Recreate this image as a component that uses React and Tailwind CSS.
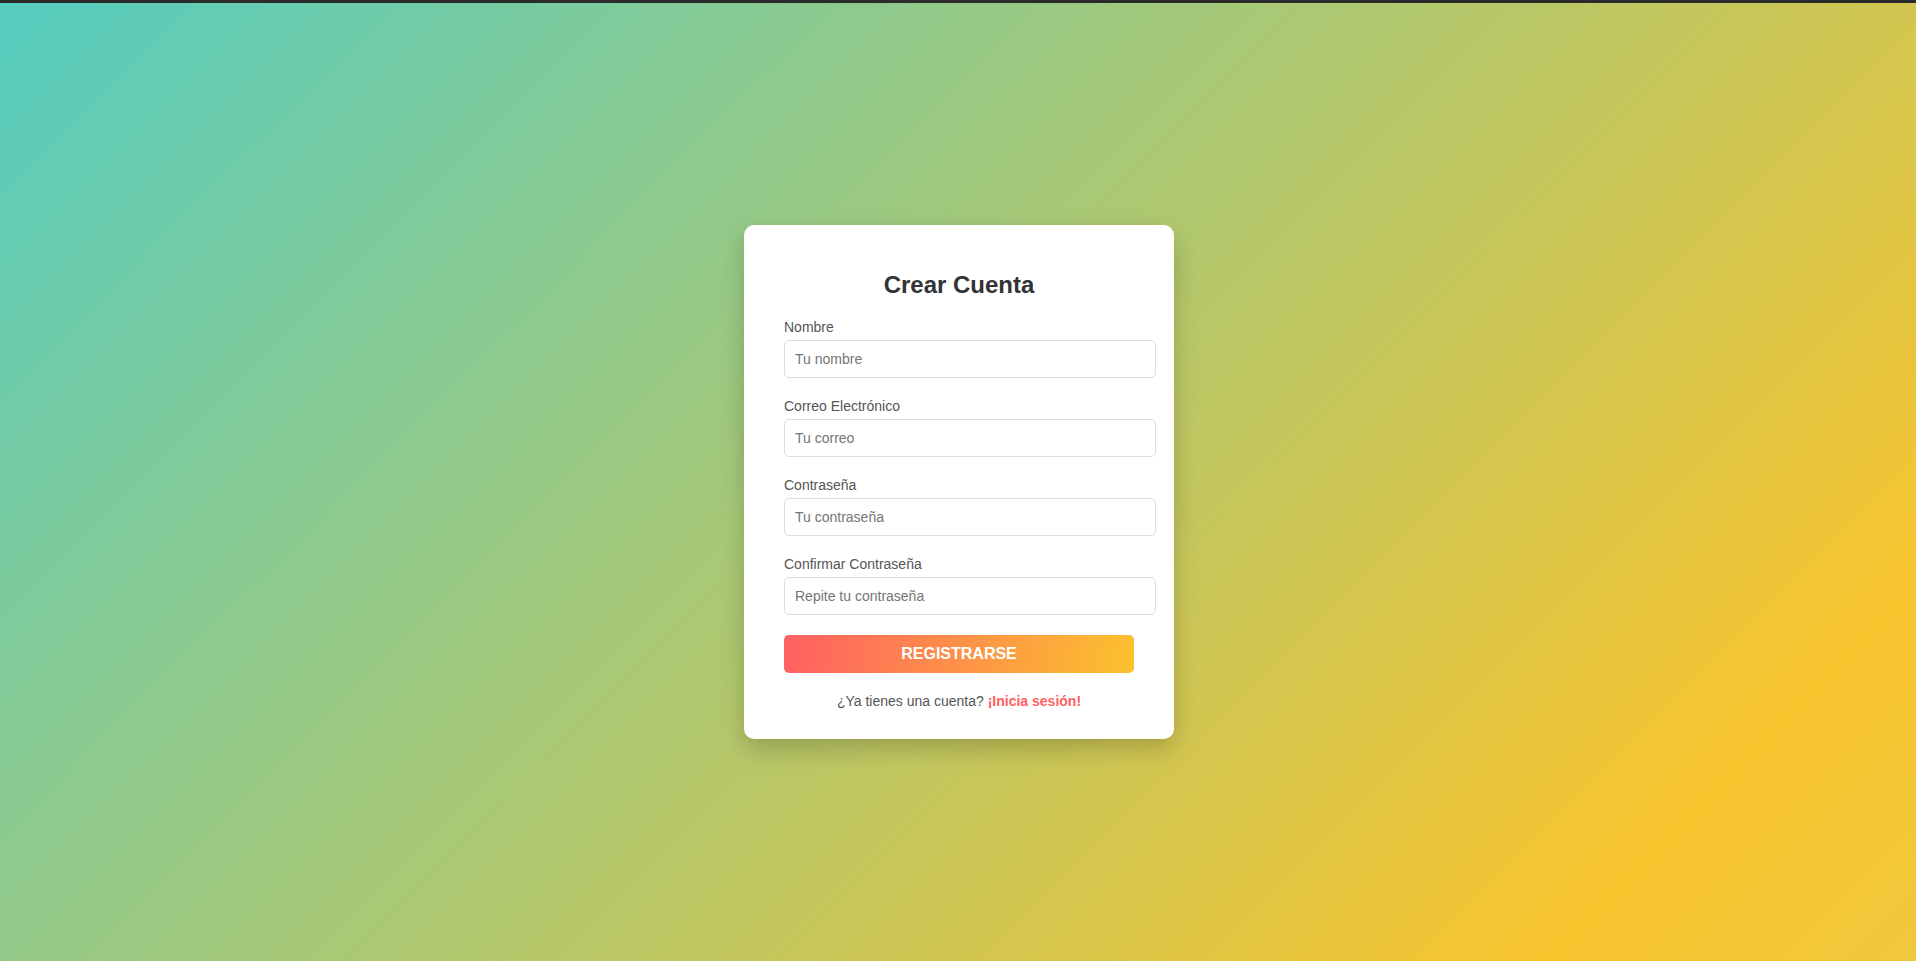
export default function App() {
  const fields = [
    { label: "Nombre", ph: "Tu nombre", type: "text" },
    { label: "Correo Electrónico", ph: "Tu correo", type: "email" },
    { label: "Contraseña", ph: "Tu contraseña", type: "password" },
    { label: "Confirmar Contraseña", ph: "Repite tu contraseña", type: "password" },
  ];
  return (
    <div className="flex flex-col h-[961px] w-full font-['Liberation_Sans',Arial,sans-serif]">
      <div className="h-[3px] bg-[#2b2b2b] shrink-0" />
      <div className="flex-1 flex items-center justify-center bg-[linear-gradient(135deg,#55cdc0_0%,#f8c42e_87%,#f0c83c_100%)]">
        <div className="ml-[2px] w-[430px] bg-white rounded-[10px] pt-[46px] pb-[30px] pl-[40px] pr-[40px] shadow-[0_10px_25px_rgba(0,0,0,0.2)]">
          <h2 className="text-[24px] leading-[28px] font-bold text-[#333] text-center mb-[20px]">Crear Cuenta</h2>
          {fields.map((f) => (
            <div key={f.label} className="mb-[20px]">
              <label className="block text-[14px] leading-[16px] text-[#555] mb-[5px]">{f.label}</label>
              <input
                type={f.type}
                placeholder={f.ph}
                className="block w-[372px] h-[38px] px-[10px] border border-[#ddd] rounded-[5px] text-[14px] text-[#333] placeholder:text-[#757575] bg-white outline-none"
              />
            </div>
          ))}
          <button className="block w-[350px] h-[38px] rounded-[5px] text-white font-bold text-[16px] bg-[linear-gradient(105deg,#ff5f62,#fbc22e)]">
            REGISTRARSE
          </button>
          <p className="mt-[20px] text-center text-[14px] leading-[16px] text-[#555]">
            ¿Ya tienes una cuenta? <a className="font-bold text-[#ff5e62]" href="#">¡Inicia sesión!</a>
          </p>
        </div>
      </div>
    </div>
  );
}
